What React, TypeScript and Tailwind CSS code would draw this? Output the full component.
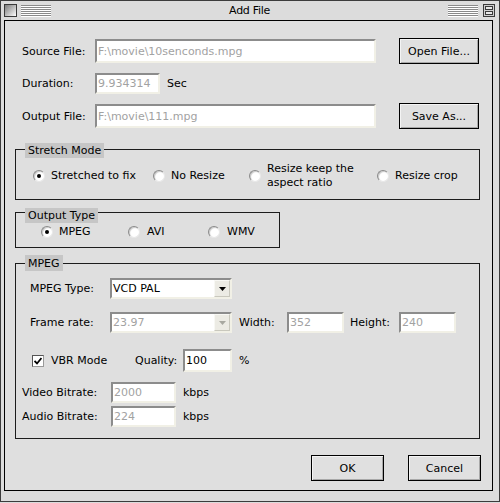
import React from "react";

function Field({ cls, text, dark }: { cls: string; text: string; dark?: boolean }) {
  return (
    <div
      className={`${cls} flex items-center bg-white border-2 border-t-[#8c8c8c] border-l-[#8c8c8c] border-r-[#f1f0e6] border-b-[#f1f0e6] pl-[1px] overflow-hidden whitespace-nowrap ${
        dark ? "text-black" : "text-[#a2a2a2]"
      }`}
    >
      {text}
    </div>
  );
}

function Btn({ cls, children }: { cls: string; children: React.ReactNode }) {
  return (
    <div
      className={`${cls} flex items-center justify-center border border-black bg-[#e0e0e0] shadow-[inset_1px_1px_0_#f4f4f4,inset_-1px_-1px_0_#a8a8a8] text-[11px]`}
    >
      {children}
    </div>
  );
}

function Radio({ checked, cls, children }: { checked?: boolean; cls?: string; children: React.ReactNode }) {
  return (
    <div className={`${cls ?? ""} flex items-center`}>
      <div className="w-[12px] h-[12px] shrink-0 rounded-full bg-white border border-t-[#8a8a8a] border-l-[#8a8a8a] border-r-[#e8e8e8] border-b-[#e8e8e8] shadow-[inset_1px_1px_1px_#c8c8c8] flex items-center justify-center">
        {checked && <div className="w-[4px] h-[4px] rounded-full bg-black" />}
      </div>
      <div className="ml-[6px] leading-[14px]">{children}</div>
    </div>
  );
}

function Select({ cls, text, disabled }: { cls: string; text: string; disabled?: boolean }) {
  return (
    <div
      className={`${cls} flex items-center bg-white border-2 border-t-[#8c8c8c] border-l-[#8c8c8c] border-r-[#f1f0e6] border-b-[#f1f0e6] pl-[1px] ${
        disabled ? "text-[#a2a2a2]" : "text-black"
      }`}
    >
      <div className="flex-1 whitespace-nowrap">{text}</div>
      <div className="w-[16px] h-full bg-[#ecebe4] border border-[#f8f8f4] border-r-[#c9c8bd] border-b-[#c9c8bd] flex items-center justify-center">
        <svg width="7" height="4" viewBox="0 0 7 4">
          <path d="M0 0H7L3.5 4Z" fill={disabled ? "#a8a8a0" : "#000"} />
        </svg>
      </div>
    </div>
  );
}

function Stripes() {
  return (
    <svg width="30" height="12" viewBox="0 0 30 12" className="shrink-0">
      {[0, 2, 4, 6, 8, 10].map((y) => (
        <g key={y}>
          <rect x="0" y={y} width="30" height="1" fill="#8a8a8a" />
          <rect x="0" y={y + 1} width="30" height="1" fill="#ffffff" />
        </g>
      ))}
    </svg>
  );
}

export default function App() {
  return (
    <div className="w-[500px] h-[503px] bg-[#dcdcdc]">
      <div className="w-[500px] h-[502px] border border-[#3c3c3c] bg-[#dcdcdc] flex flex-col font-['DejaVu_Sans',sans-serif] text-[11px] text-black leading-none">
        {/* title bar */}
        <div className="h-[19px] flex items-center pl-[3px] pr-[4px] shrink-0">
          <div className="w-[13px] h-[13px] shrink-0 border border-[#3a3a3a] bg-gradient-to-br from-[#7c7c7c] to-[#ffffff]" />
          <div className="ml-[4px]">
            <Stripes />
          </div>
          <div className="flex-1 text-center text-[11px] tracking-[-0.3px]">Add File</div>
          <Stripes />
          <svg width="12" height="13" viewBox="0 0 12 13" className="ml-[5px] shrink-0">
            <rect x="0.5" y="0.5" width="11" height="12" fill="#cfcfcf" stroke="#3a3a3a" />
            <rect x="2.5" y="2.5" width="7" height="3" fill="#e8e8e8" stroke="#3a3a3a" />
            <rect x="2.5" y="7.5" width="7" height="3" fill="#e8e8e8" stroke="#3a3a3a" />
          </svg>
        </div>

        {/* content */}
        <div className="ml-[3px] w-[489px] h-[471px] border border-black bg-[#dfdfdf] flex flex-col shrink-0">
          <div className="mt-[17px] h-[26px] flex items-center pl-[17px]">
            <span className="w-[73px]">Source File:</span>
            <Field cls="w-[281px] h-[24px]" text="F:\movie\10senconds.mpg" />
            <Btn cls="ml-[23px] w-[80px] h-[26px]">Open File...</Btn>
          </div>
          <div className="mt-[9px] h-[21px] flex items-center pl-[17px]">
            <span className="w-[73px]">Duration:</span>
            <Field cls="w-[65px] h-[21px]" text="9.934314" />
            <span className="ml-[7px]">Sec</span>
          </div>
          <div className="mt-[9px] h-[26px] flex items-center pl-[17px]">
            <span className="w-[73px]">Output File:</span>
            <Field cls="w-[281px] h-[24px]" text="F:\movie\111.mpg" />
            <Btn cls="ml-[23px] w-[80px] h-[26px]">Save As...</Btn>
          </div>

          {/* Stretch Mode */}
          <div className="mt-[20px] ml-[10px] w-[465px] h-[51px] shrink-0 relative border border-[#1c1c1c]">
            <div className="absolute left-[9px] top-[-7px] h-[15px] px-[3px] bg-[#c6c6c6] flex items-center">Stretch Mode</div>
            <div className="h-full flex items-center pl-[17px] pt-[2px]">
              <Radio checked cls="w-[120px]">Stretched to fix</Radio>
              <Radio cls="w-[96px]">No Resize</Radio>
              <Radio cls="w-[128px]">
                Resize keep the
                <br />
                aspect ratio
              </Radio>
              <Radio>Resize crop</Radio>
            </div>
          </div>

          {/* Output Type */}
          <div className="mt-[12px] ml-[10px] w-[265px] h-[36px] shrink-0 relative border border-[#1c1c1c]">
            <div className="absolute left-[9px] top-[-5px] h-[15px] px-[3px] bg-[#c6c6c6] flex items-center">Output Type</div>
            <div className="h-full flex items-center pl-[25px] pt-[4px]">
              <Radio checked cls="w-[87px]">MPEG</Radio>
              <Radio cls="w-[80px]">
                <span className="ml-[1px]">AVI</span>
              </Radio>
              <Radio>
                <span className="ml-[1px]">WMV</span>
              </Radio>
            </div>
          </div>

          {/* MPEG */}
          <div className="mt-[15px] ml-[10px] w-[465px] h-[176px] shrink-0 relative border border-[#1c1c1c] flex flex-col">
            <div className="absolute left-[9px] top-[-9px] h-[16px] px-[3px] bg-[#c6c6c6] flex items-center">MPEG</div>
            <div className="mt-[14px] h-[21px] flex items-center pl-[14px]">
              <span className="w-[80px]">MPEG Type:</span>
              <Select cls="w-[122px] h-[21px]" text="VCD PAL" />
            </div>
            <div className="mt-[13px] h-[21px] flex items-center pl-[14px]">
              <span className="w-[80px]">Frame rate:</span>
              <Select cls="w-[122px] h-[21px]" text="23.97" disabled />
              <span className="ml-[7px] w-[48px]">Width:</span>
              <Field cls="w-[57px] h-[21px]" text="352" />
              <span className="ml-[6px] w-[49px]">Height:</span>
              <Field cls="w-[57px] h-[21px]" text="240" />
            </div>
            <div className="mt-[16px] h-[23px] flex items-center pl-[16px]">
              <div className="w-[103px] flex items-center">
                <div className="w-[12px] h-[12px] bg-white border border-t-[#555] border-l-[#555] border-r-[#9a9a9a] border-b-[#9a9a9a] flex items-center justify-center">
                  <svg width="8" height="8" viewBox="0 0 8 8">
                    <path d="M0.5 4L3 6.5L7.5 1" stroke="#000" strokeWidth="1.8" fill="none" />
                  </svg>
                </div>
                <span className="ml-[7px]">VBR Mode</span>
              </div>
              <span className="w-[48px]">Quality:</span>
              <Field cls="w-[49px] h-[23px]" text="100" dark />
              <span className="ml-[7px]">%</span>
            </div>
            <div className="mt-[10px] h-[21px] flex items-center pl-[6px]">
              <span className="w-[89px]">Video Bitrate:</span>
              <Field cls="w-[65px] h-[21px]" text="2000" />
              <span className="ml-[7px]">kbps</span>
            </div>
            <div className="mt-[3px] h-[21px] flex items-center pl-[6px]">
              <span className="w-[89px]">Audio Bitrate:</span>
              <Field cls="w-[65px] h-[21px]" text="224" />
              <span className="ml-[7px]">kbps</span>
            </div>
          </div>

          {/* buttons */}
          <div className="mt-[16px] flex justify-end gap-[24px] pr-[11px]">
            <Btn cls="w-[73px] h-[26px]">OK</Btn>
            <Btn cls="w-[73px] h-[26px]">Cancel</Btn>
          </div>
        </div>
      </div>
    </div>
  );
}
